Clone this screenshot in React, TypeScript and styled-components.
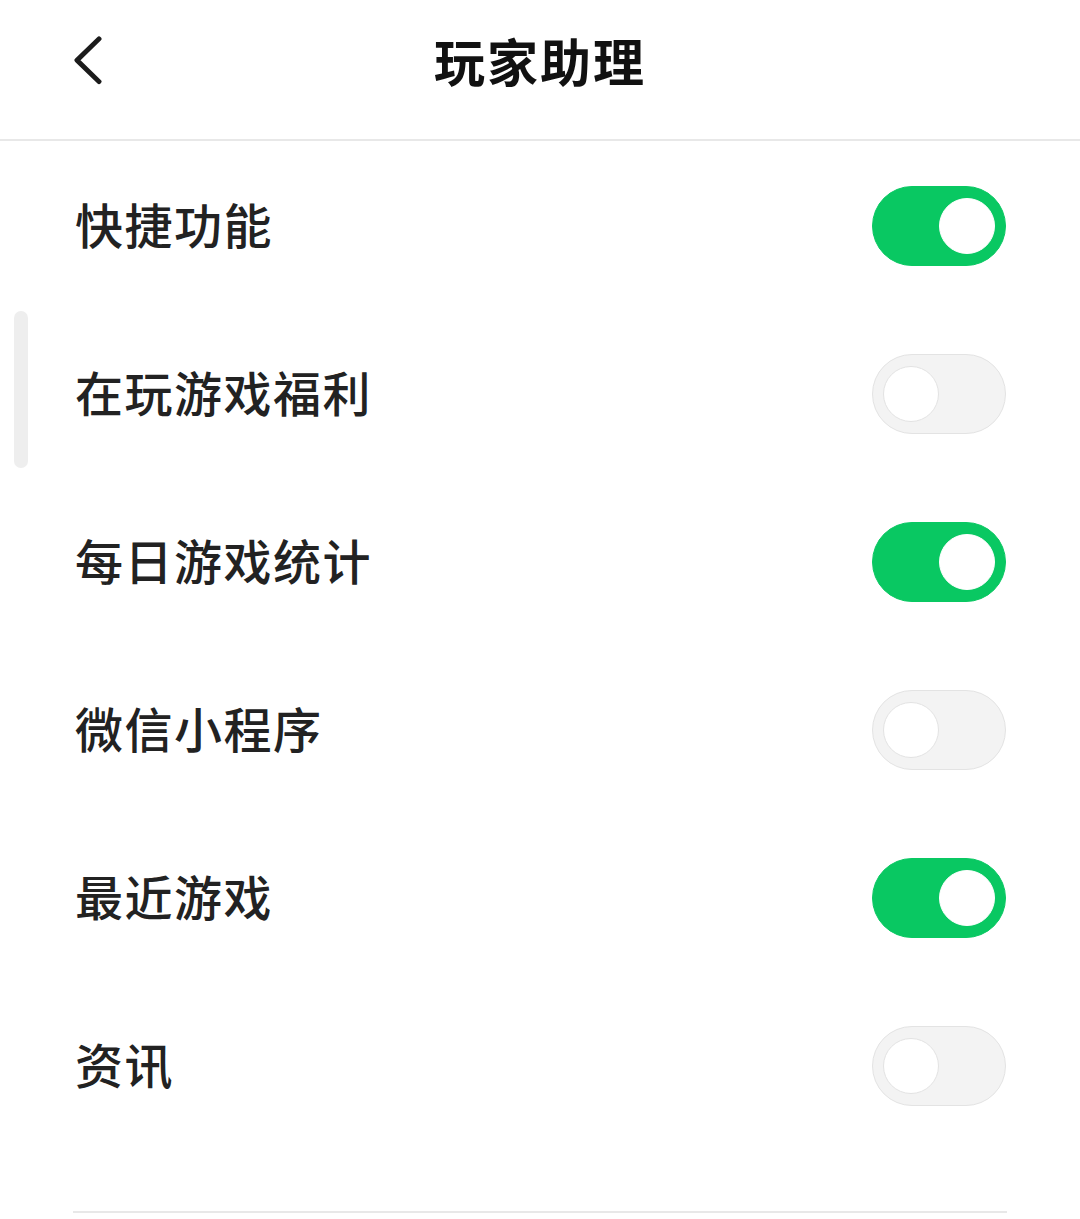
import { useState } from 'react';
import styled, { createGlobalStyle } from 'styled-components';

const GlobalStyle = createGlobalStyle`
  html, body {
    margin: 0;
    padding: 0;
    background: #ffffff;
  }
  body {
    font-family: "Noto Sans CJK SC", "Noto Sans", sans-serif;
    color: #222222;
  }
`;

const ITEMS = [
  { id: 'shortcut', label: '快捷功能', on: true },
  { id: 'welfare', label: '在玩游戏福利', on: false },
  { id: 'stats', label: '每日游戏统计', on: true },
  { id: 'mini', label: '微信小程序', on: false },
  { id: 'recent', label: '最近游戏', on: true },
  { id: 'news', label: '资讯', on: false },
];

const BackIcon = () => (
  <svg width="30" height="50" viewBox="0 0 30 50" fill="none">
    <polyline
      points="26,3 4,25 26,47"
      stroke="#1c1c1c"
      strokeWidth="5"
      strokeLinecap="round"
      strokeLinejoin="round"
      transform="translate(0,0) scale(1,0.97)"
    />
  </svg>
);

export default function App() {
  const [items, setItems] = useState(ITEMS);

  const toggle = (id: string) =>
    setItems((prev) =>
      prev.map((it) => (it.id === id ? { ...it, on: !it.on } : it))
    );

  return (
    <Page>
      <GlobalStyle />
      <Header>
        <BackButton aria-label="返回">
          <BackIcon />
        </BackButton>
        <Title>玩家助理</Title>
      </Header>
      <List>
        {items.map((it) => (
          <Row key={it.id}>
            <Label>{it.label}</Label>
            <Switch
              $on={it.on}
              role="switch"
              aria-checked={it.on}
              onClick={() => toggle(it.id)}
            >
              <Knob $on={it.on} />
            </Switch>
          </Row>
        ))}
      </List>
      <BottomLine />
      <ScrollThumb />
    </Page>
  );
}

const Page = styled.main`
  position: relative;
  width: 1080px;
  min-height: 1219px;
  background: #ffffff;
  overflow: hidden;
`;

const Header = styled.header`
  position: relative;
  display: flex;
  align-items: center;
  justify-content: center;
  height: 139px;
  border-bottom: 2px solid #e8e8e8;
`;

const BackButton = styled.button`
  position: absolute;
  left: 73px;
  top: 36px;
  display: flex;
  padding: 0;
  border: none;
  background: none;
  cursor: pointer;
`;

const Title = styled.h1`
  margin: 0 0 18px 0;
  font-size: 51px;
  font-weight: 700;
  letter-spacing: 2px;
  color: #111111;
  line-height: 1;
`;

const List = styled.section`
  display: flex;
  flex-direction: column;
  padding: 1px 74px 0 75px;
`;

const Row = styled.div`
  display: flex;
  align-items: center;
  justify-content: space-between;
  height: 168px;
`;

const Label = styled.span`
  font-size: 48px;
  font-weight: 500;
  letter-spacing: 1.5px;
  color: #222222;
  margin-top: -6px;
`;

const Switch = styled.button<{ $on: boolean }>`
  position: relative;
  width: 134px;
  height: 80px;
  padding: 0;
  border-radius: 40px;
  box-sizing: border-box;
  border: 1px solid ${({ $on }) => ($on ? '#09c862' : '#e3e3e3')};
  background: ${({ $on }) => ($on ? '#09c862' : '#f3f3f3')};
  cursor: pointer;
`;

const Knob = styled.span<{ $on: boolean }>`
  position: absolute;
  top: 11px;
  left: ${({ $on }) => ($on ? '66px' : '10px')};
  width: 56px;
  height: 56px;
  box-sizing: border-box;
  border-radius: 50%;
  background: #ffffff;
  border: 1px solid ${({ $on }) => ($on ? '#ffffff' : '#e3e3e3')};
`;

const BottomLine = styled.div`
  margin: 61px 73px 0 73px;
  height: 2px;
  background: #e8e8e8;
`;

const ScrollThumb = styled.div`
  position: absolute;
  left: 14px;
  top: 311px;
  width: 14px;
  height: 157px;
  border-radius: 7px;
  background: #eeeeee;
`;
